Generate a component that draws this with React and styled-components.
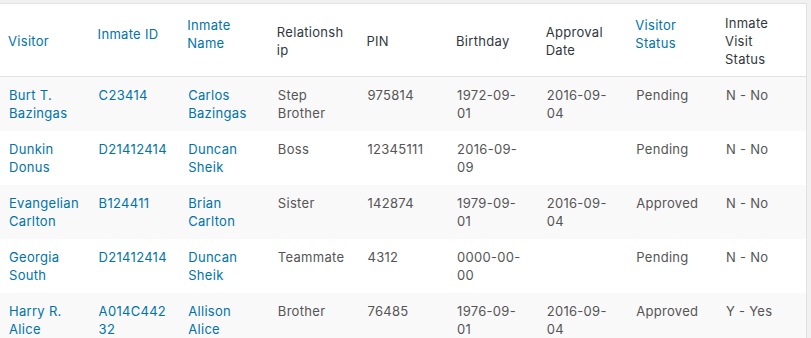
import React from "react";
import styled, { createGlobalStyle } from "styled-components";

const Global = createGlobalStyle`
  html, body { margin: 0; padding: 0; background: #f1f1f1; }
  body { font-family: Inter, "Noto Sans", Roboto, sans-serif; font-size: 13px; }
`;

const Wrap = styled.div`
  padding-top: 3px;
  width: 811px;
  height: 338px;
  overflow: hidden;
`;

const Table = styled.table`
  width: 807px;
  table-layout: fixed;
  border-collapse: collapse;
  background: #fff;
  border-top: 1px solid #e1e1e1;
  border-right: 1px solid #e1e1e1;
`;

const HeadRow = styled.tr`
  height: 73px;
  border-bottom: 1px solid #e1e1e1;
`;

const Th = styled.th`
  box-sizing: border-box;
  text-align: left;
  font-weight: 400;
  font-size: 13px;
  line-height: 18px;
  letter-spacing: 0.3px;
  color: ${(p) => (p.$link ? "#0073aa" : "#32373c")};
  padding: ${(p) => (p.$raise ? "1px 13px 13px 8px" : "1px 13px 0 8px")};
  vertical-align: middle;
  overflow-wrap: anywhere;
`;

const Row = styled.tr`
  background: ${(p) => (p.$striped ? "#f9f9f9" : "#fff")};
`;

const Td = styled.td`
  box-sizing: border-box;
  height: 54px;
  padding: 9px 10px 9px 9px;
  vertical-align: top;
  font-size: 13px;
  line-height: 18px;
  letter-spacing: 0.3px;
  color: ${(p) => (p.$link ? "#0073aa" : "#555")};
  overflow-wrap: anywhere;
`;

const headers = [
  { t: "Visitor", link: true },
  { t: "Inmate ID", link: true, raise: true },
  { t: "Inmate Name", link: true, raise: true },
  { t: "Relationship" },
  { t: "PIN" },
  { t: "Birthday" },
  { t: "Approval Date" },
  { t: "Visitor Status", link: true, raise: true },
  { t: "Inmate Visit Status" },
];

const rows = [
  ["Burt T. Bazingas", "C23414", "Carlos Bazingas", "Step Brother", "975814", "1972-09-01", "2016-09-04", "Pending", "N - No"],
  ["Dunkin Donus", "D21412414", "Duncan Sheik", "Boss", "12345111", "2016-09-09", "", "Pending", "N - No"],
  ["Evangelian Carlton", "B124411", "Brian Carlton", "Sister", "142874", "1979-09-01", "2016-09-04", "Approved", "N - No"],
  ["Georgia South", "D21412414", "Duncan Sheik", "Teammate", "4312", "0000-00-00", "", "Pending", "N - No"],
  ["Harry R. Alice", "A014C44232", "Allison Alice", "Brother", "76485", "1976-09-01", "2016-09-04", "Approved", "Y - Yes"],
];

const linkCols = [0, 1, 2];

export default function App() {
  return (
    <Wrap>
      <Global />
      <Table>
        <thead>
          <HeadRow>
            {headers.map((h) => (
              <Th key={h.t} $link={h.link} $raise={h.raise}>
                {h.t}
              </Th>
            ))}
          </HeadRow>
        </thead>
        <tbody>
          {rows.map((r, i) => (
            <Row key={i} $striped={i % 2 === 0}>
              {r.map((c, j) => (
                <Td key={j} $link={linkCols.includes(j)}>
                  {c}
                </Td>
              ))}
            </Row>
          ))}
        </tbody>
      </Table>
    </Wrap>
  );
}
